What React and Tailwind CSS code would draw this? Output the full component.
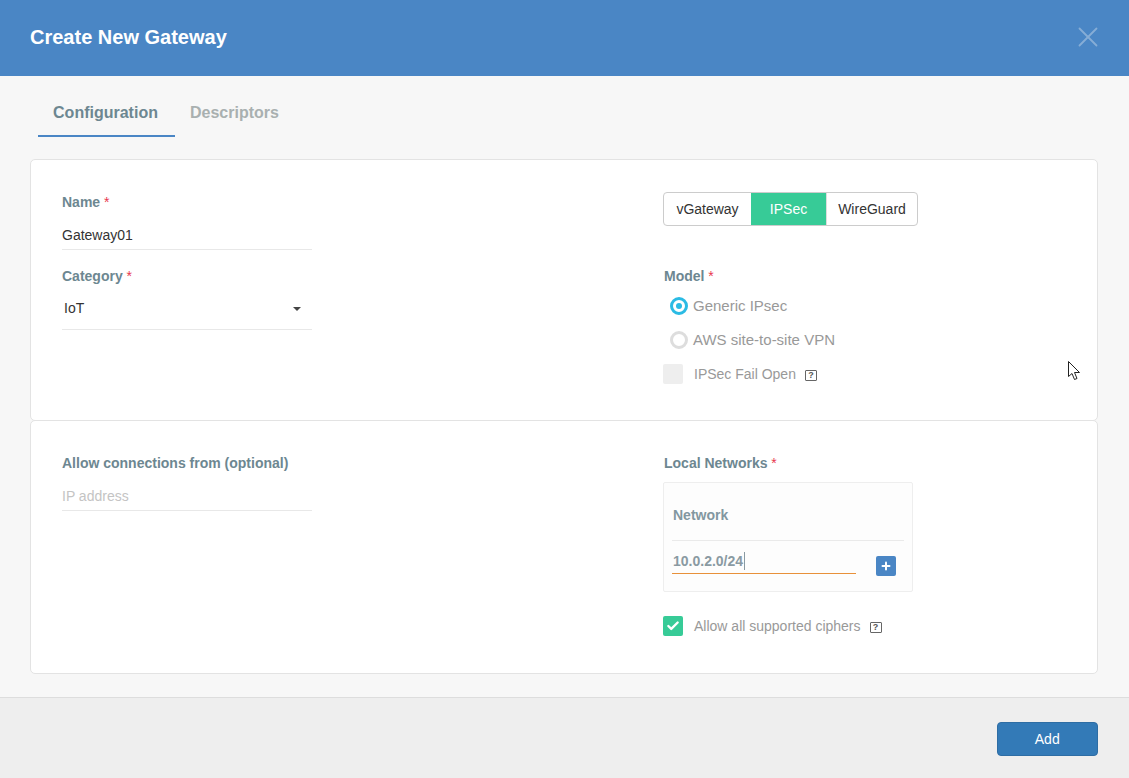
import { Check, Plus, X } from "lucide-react";

const Req = () => <span className="text-[#e8384f] font-normal"> *</span>;

const Label = ({ children, required }) => (
  <div className="h-[20px] text-[14px] leading-[20px] font-bold text-[#6d8791]">
    {children}
    {required && <Req />}
  </div>
);

const Hint = () => (
  <span className="mt-[2px] ml-[9px] flex h-[11px] w-[12px] items-center justify-center rounded-[1px] border border-[#666] text-[9px] leading-none font-bold text-[#555]">
    ?
  </span>
);

const App = () => {
  return (
    <div className="relative flex h-[778px] w-[1129px] flex-col overflow-hidden bg-[#f7f7f7] font-['Liberation_Sans',Arial,sans-serif]">
      {/* header */}
      <div className="flex h-[76px] shrink-0 items-center justify-between bg-[#4a86c5] pr-[24.5px] pb-[2px] pl-[30px]">
        <h1 className="text-[20px] font-bold text-white">Create New Gateway</h1>
        <X size={34} strokeWidth={1.3} className="text-[#86add6]" />
      </div>

      {/* tabs */}
      <div className="flex h-[61px] shrink-0 pl-[38px] text-[16px] font-bold">
        <div className="flex w-[137px] items-center justify-center border-b-2 border-[#4a86c5] pt-[14px] pr-[2px] text-[#6d8791]">
          Configuration
        </div>
        <div className="flex items-center pt-[12px] pl-[15px] text-[#a9b0b0]">
          Descriptors
        </div>
      </div>

      <div className="mt-[22px] mr-[31px] ml-[30px] flex flex-col">
        {/* first card */}
        <div className="flex h-[262px] rounded-[5px] border border-[#e3e3e3] bg-white pl-[31px]">
          <div className="w-[601px] pt-[32px]">
            <Label required>Name</Label>
            <div className="mt-[10px] h-[28px] w-[250px] border-b border-[#e8e8e8] pt-[3px] text-[14px] leading-[20px] text-[#333]">
              Gateway01
            </div>
            <div className="mt-[16px]">
              <Label required>Category</Label>
            </div>
            <div className="mt-[2px] flex h-[42px] w-[250px] items-center justify-between border-b border-[#e8e8e8] pr-[11px] pl-[2px] text-[14px] text-[#333]">
              <span>IoT</span>
              <span className="h-0 w-0 border-x-[4px] border-t-[4px] border-x-transparent border-t-[#444]" />
            </div>
          </div>
          <div className="pt-[32px]">
            <div className="flex h-[34px] w-[255px] overflow-hidden rounded-[4px] border border-[#ccc] text-[14px] text-[#333]">
              <div className="flex w-[87px] items-center justify-center">vGateway</div>
              <div className="flex w-[75px] items-center justify-center bg-[#37cb97] text-white">IPSec</div>
              <div className="flex flex-1 items-center justify-center border-l border-[#ddd]">WireGuard</div>
            </div>
            <div className="mt-[40px] pl-px">
              <Label required>Model</Label>
            </div>
            <div className="mt-[8px] flex h-[24px] items-center pl-[7px] text-[15px] text-[#999]">
              <span className="flex h-[18px] w-[18px] items-center justify-center rounded-full border-[3px] border-[#2bbbe4]">
                <span className="h-[6px] w-[6px] rounded-full bg-[#2bbbe4]" />
              </span>
              <span className="ml-[5px]">Generic IPsec</span>
            </div>
            <div className="mt-[10px] flex h-[24px] items-center pl-[7px] text-[15px] text-[#999]">
              <span className="h-[18px] w-[18px] rounded-full border-[3px] border-[#ddd]" />
              <span className="ml-[5px]">AWS site-to-site VPN</span>
            </div>
            <div className="mt-[10px] flex h-[24px] items-center text-[14px] text-[#999]">
              <span className="h-[20px] w-[20px] rounded-[2px] bg-[#eee]" />
              <span className="ml-[11px]">IPSec Fail Open</span>
              <Hint />
            </div>
          </div>
        </div>

        {/* second card */}
        <div className="-mt-px flex h-[254px] rounded-[5px] border border-[#e3e3e3] bg-white pl-[31px]">
          <div className="w-[601px] pt-[32px]">
            <Label>Allow connections from (optional)</Label>
            <div className="mt-[10px] h-[28px] w-[250px] border-b border-[#e8e8e8] pt-[3px] text-[14px] leading-[20px] text-[#c4c4c4]">
              IP address
            </div>
          </div>
          <div className="pt-[32px]">
            <div className="pl-px">
              <Label required>Local Networks</Label>
            </div>
            <div className="mt-[9px] h-[110px] w-[250px] rounded-[2px] border border-[#eee] bg-[#fdfdfd] px-[8px]">
              <div className="flex h-[58px] items-center border-b border-[#eaeaea] pt-[8px] pl-px text-[14px] font-bold text-[#8297a0]">
                Network
              </div>
              <div className="flex items-start">
                <div className="mt-[8px] flex h-[25px] w-[184px] items-center border-b border-[#e8913a] pl-px text-[14px] font-bold text-[#8a9aa2]">
                  10.0.2.0/24
                  <span className="ml-px h-[18px] w-px bg-[#8a9aa2]" />
                </div>
                <span className="mt-[15px] ml-[20px] flex h-[20px] w-[20px] items-center justify-center rounded-[2px] bg-[#4a86c5]">
                  <Plus size={12} strokeWidth={4} className="text-white" />
                </span>
              </div>
            </div>
            <div className="mt-[23px] flex h-[22px] items-center text-[14px] text-[#999]">
              <span className="flex h-[20px] w-[20px] items-center justify-center rounded-[2px] bg-[#37cb97]">
                <Check size={14} strokeWidth={4} className="text-white" />
              </span>
              <span className="ml-[11px]">Allow all supported ciphers</span>
              <Hint />
            </div>
          </div>
        </div>
      </div>

      {/* footer */}
      <div className="mt-auto flex h-[81px] items-center justify-end border-t border-[#ddd] bg-[#eee] pt-[2px] pr-[31.5px]">
        <button className="h-[34px] w-[100.5px] rounded-[4px] border border-[#2e6da4] bg-[#337ab7] text-[14px] text-white">
          Add
        </button>
      </div>

      {/* mouse pointer */}
      <svg className="absolute top-[361px] left-[1068px]" width="13" height="20" viewBox="0 0 13 20">
        <path d="M0.5 0.5 V15.5 L4 12.5 L6.5 18.5 L9 17.5 L6.5 11.5 H11.5 Z" fill="#fff" stroke="#222" strokeWidth="1" />
      </svg>
    </div>
  );
};

export default App;
